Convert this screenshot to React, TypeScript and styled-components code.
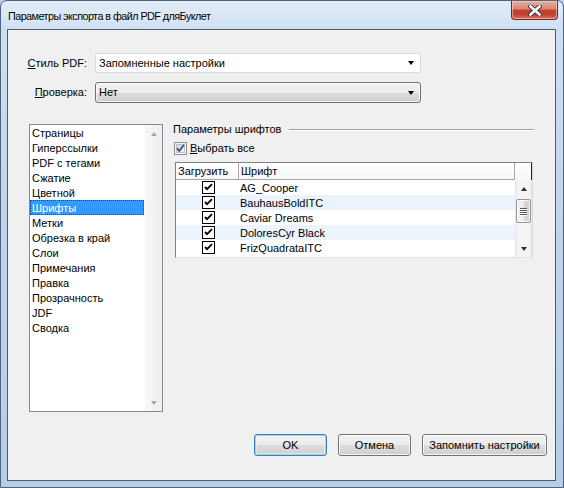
import React from "react";
import styled, { createGlobalStyle } from "styled-components";

const Global = createGlobalStyle`
  html, body { margin: 0; padding: 0; background: #b9d1ea; }
  body {
    width: 564px; height: 488px; overflow: hidden;
    font-family: "Liberation Sans", Arial, sans-serif;
    font-size: 11px; color: #000;
  }
  * { box-sizing: border-box; }
`;

const Window = styled.div`
  width: 564px;
  height: 488px;
  border: 1px solid #4f6478;
  border-radius: 7px 7px 0 0;
  background: linear-gradient(180deg, #e3edf8 0%, #cddff2 6%, #c1d6ed 40%, #b4cde8 100%);
  display: flex;
  flex-direction: column;
  padding: 0 7px 6px 6px;
  overflow: hidden;
`;

const TitleBar = styled.div`
  height: 28px;
  flex: none;
  display: flex;
  align-items: flex-start;
  justify-content: space-between;
  margin-right: -2px;
`;

const Title = styled.div`
  padding: 9px 0 0 1px;
  font-size: 10.8px;
  letter-spacing: -0.55px;
  line-height: 13px;
  color: #000;
  text-shadow: 0 0 6px rgba(255, 255, 255, 0.9);
`;

const CloseButton = styled.div`
  width: 47px;
  height: 19px;
  border: 1px solid #6b2b23;
  border-top: none;
  border-radius: 0 0 4px 4px;
  background: linear-gradient(180deg, #e6ada0 0%, #d88676 45%, #c4402f 50%, #c3412f 75%, #d8705e 100%);
  box-shadow: inset 0 0 0 1px rgba(255, 220, 210, 0.55);
  display: flex;
  align-items: center;
  justify-content: center;
`;

const Client = styled.div`
  flex: 1;
  border: 1px solid #4e5b69;
  background: #f0f0f0;
  display: flex;
  flex-direction: column;
  padding: 23px 8px 24px 0;
`;

const FormGrid = styled.div`
  display: grid;
  grid-template-columns: 79px 326px;
  column-gap: 8px;
  row-gap: 9px;
  align-items: center;
`;

const FieldLabel = styled.div`
  text-align: right;
  line-height: 13px;
`;

const ComboEditable = styled.div`
  height: 20px;
  border: 1px solid #dadada;
  border-radius: 2px;
  background: #fff;
  display: flex;
  align-items: center;
  padding: 0 3px 0 3px;
`;

const ComboButton = styled.div`
  height: 21px;
  border: 1px solid #707070;
  border-radius: 3px;
  background: linear-gradient(180deg, #f2f2f2 0%, #ebebeb 50%, #dddddd 51%, #cfcfcf 100%);
  box-shadow: inset 0 0 0 1px rgba(255, 255, 255, 0.7);
  display: flex;
  align-items: center;
  padding: 0 3px 0 3px;
`;

const ComboText = styled.div`
  flex: 1;
  line-height: 13px;
`;

const Arrow = styled.div`
  width: 0;
  height: 0;
  border-left: 3.5px solid transparent;
  border-right: 3.5px solid transparent;
  border-top: 4px solid #000;
  margin-right: 3px;
`;

const Body = styled.div`
  display: flex;
  margin-top: 21px;
  padding-left: 21px;
  gap: 10px;
  align-items: flex-start;
`;

const ListBox = styled.div`
  width: 134px;
  height: 288px;
  border: 1px solid #828790;
  background: #fff;
  display: flex;
`;

const ListItems = styled.div`
  flex: 1;
`;

const ListItem = styled.div<{ $selected?: boolean }>`
  height: 15px;
  line-height: 14px;
  padding: 1px 0 0 2px;
  margin-right: 1px;
  white-space: nowrap;
  background: ${(p) => (p.$selected ? "#3399ff" : "transparent")};
  color: ${(p) => (p.$selected ? "#fff" : "#000")};
  outline: ${(p) => (p.$selected ? "1px dotted #1a3f7a" : "none")};
  outline-offset: -1px;
`;

const ListScroll = styled.div`
  width: 17px;
  background: linear-gradient(90deg, #f7f7f7 0%, #eeeeee 100%);
  border-left: 1px solid #f4f4f4;
  display: flex;
  flex-direction: column;
  justify-content: space-between;
  align-items: center;
`;

const ArrowBox = styled.div`
  height: 17px;
  width: 100%;
  display: flex;
  align-items: center;
  justify-content: center;
`;

const TriUp = styled.div<{ $c?: string }>`
  width: 0;
  height: 0;
  border-left: 3.5px solid transparent;
  border-right: 3.5px solid transparent;
  border-bottom: 4px solid ${(p) => p.$c || "#303030"};
`;

const TriDown = styled.div<{ $c?: string }>`
  width: 0;
  height: 0;
  border-left: 3.5px solid transparent;
  border-right: 3.5px solid transparent;
  border-top: 4px solid ${(p) => p.$c || "#303030"};
`;

const RightPanel = styled.div`
  width: 361px;
  margin-top: -2px;
  display: flex;
  flex-direction: column;
`;

const GroupHeader = styled.div`
  display: flex;
  align-items: center;
  height: 14px;
  gap: 8px;
`;

const GroupTitle = styled.div`
  line-height: 13px;
  white-space: nowrap;
`;

const GroupLine = styled.div`
  flex: 1;
  height: 0;
  border-top: 1px solid #a0a0a0;
  border-bottom: 1px solid #fff;
  margin-top: 1px;
`;

const CheckRow = styled.label`
  display: flex;
  align-items: center;
  gap: 3px;
  margin: 6px 0 0 1px;
  height: 13px;
  line-height: 13px;
`;

const Table = styled.div`
  margin: 7px 0 0 2px;
  width: 358px;
  height: 96px;
  border-top: 1px solid #828282;
  border-left: 1px solid #828282;
  border-right: 1px solid #d8d8d8;
  border-bottom: 1px solid #e3e3e3;
  background: #fff;
  display: flex;
  flex-direction: column;
`;

const HeaderRow = styled.div`
  height: 17px;
  display: flex;
  background: linear-gradient(180deg, #ffffff 0%, #f6f6f6 100%);
`;

const HeaderCell = styled.div<{ $w: number }>`
  width: ${(p) => p.$w}px;
  border-right: 1px solid #a5a5a5;
  border-bottom: 1px solid #a5a5a5;
  padding-left: 2px;
  line-height: 16px;
  white-space: nowrap;
`;

const HeaderEnd = styled.div`
  flex: 1;
  border-right: 1px solid #202020;
`;

const TableBody = styled.div`
  flex: 1;
  display: flex;
`;

const Rows = styled.div`
  width: 339px;
`;

const Row = styled.div<{ $alt?: boolean }>`
  height: 15px;
  display: flex;
  align-items: center;
  background: ${(p) => (p.$alt ? "#ebf3fd" : "#fff")};
`;

const CheckCell = styled.div`
  width: 63px;
  display: flex;
  justify-content: center;
  padding-left: 2px;
`;

const NameCell = styled.div`
  padding: 1px 0 0 1px;
  line-height: 14px;
  white-space: nowrap;
`;

const VScroll = styled.div`
  width: 17px;
  background: linear-gradient(90deg, #e8e8e8 0%, #f5f5f5 20%, #f5f5f5 80%, #e8e8e8 100%);
  display: flex;
  flex-direction: column;
  align-items: center;
`;

const Thumb = styled.div`
  width: 15px;
  height: 24px;
  margin-top: 2px;
  border: 1px solid #959595;
  border-radius: 2px;
  background: linear-gradient(90deg, #f3f3f3 0%, #ebebeb 50%, #d9d9d9 51%, #cdcdcd 100%);
  box-shadow: inset 0 0 0 1px rgba(255, 255, 255, 0.8);
  display: flex;
  flex-direction: column;
  align-items: center;
  justify-content: center;
  gap: 1px;
`;

const Grip = styled.div`
  width: 7px;
  height: 1px;
  background: #555;
  box-shadow: 0 1px 0 #fff;
`;

const Spacer = styled.div`
  flex: 1;
`;

const ButtonRow = styled.div`
  display: flex;
  justify-content: flex-end;
  gap: 11px;
  margin-top: auto;
`;

const DialogButton = styled.div<{ $w: number; $default?: boolean }>`
  width: ${(p) => p.$w}px;
  height: 22px;
  border: 1px solid ${(p) => (p.$default ? "#3c7fb1" : "#707070")};
  border-radius: 3px;
  background: linear-gradient(180deg, #f2f2f2 0%, #ebebeb 50%, #dddddd 51%, #cfcfcf 100%);
  box-shadow: ${(p) =>
    p.$default
      ? "inset 0 0 0 1px #9ed3f0, inset 0 0 0 2px rgba(255,255,255,0.4)"
      : "inset 0 0 0 1px rgba(255,255,255,0.8)"};
  display: flex;
  align-items: center;
  justify-content: center;
  line-height: 13px;
  white-space: nowrap;
`;

const CloseGlyph = () => (
  <svg width="14" height="11" viewBox="0 0 14 11">
    <path d="M2.5 1.5 L11.5 9.5 M11.5 1.5 L2.5 9.5" stroke="#3b3b3b" strokeWidth="4.6" strokeLinecap="square" />
    <path d="M2.5 1.5 L11.5 9.5 M11.5 1.5 L2.5 9.5" stroke="#ffffff" strokeWidth="2.6" strokeLinecap="square" />
  </svg>
);

const Win7Check = () => (
  <svg width="13" height="13" viewBox="0 0 13 13">
    <defs>
      <linearGradient id="cbg" x1="0" y1="0" x2="1" y2="1">
        <stop offset="0" stopColor="#cbcfd5" />
        <stop offset="1" stopColor="#f6f6f6" />
      </linearGradient>
    </defs>
    <rect x="0.5" y="0.5" width="12" height="12" fill="#f4f4f4" stroke="#8e8f8f" />
    <rect x="2.5" y="2.5" width="8" height="8" fill="url(#cbg)" stroke="#c1c4c8" />
    <path d="M3 6.3 L5.2 9 L10 2.8" fill="none" stroke="#3b4f94" strokeWidth="1.8" />
  </svg>
);

const ClassicCheck = () => (
  <svg width="13" height="13" viewBox="0 0 13 13">
    <rect x="0.5" y="0.5" width="12" height="12" fill="#fff" stroke="#000" />
    <path d="M3 6 L5 8.2 L10 3.2" fill="none" stroke="#000" strokeWidth="1.9" />
  </svg>
);

const sections = [
  "Страницы",
  "Гиперссылки",
  "PDF с тегами",
  "Сжатие",
  "Цветной",
  "Шрифты",
  "Метки",
  "Обрезка в край",
  "Слои",
  "Примечания",
  "Правка",
  "Прозрачность",
  "JDF",
  "Сводка",
];

const fonts = ["AG_Cooper", "BauhausBoldITC", "Caviar Dreams", "DoloresCyr Black", "FrizQuadrataITC"];

export default function App() {
  return (
    <>
      <Global />
      <Window>
        <TitleBar>
          <Title>Параметры экспорта в файл PDF дляБуклет</Title>
          <CloseButton>
            <CloseGlyph />
          </CloseButton>
        </TitleBar>
        <Client>
          <FormGrid>
            <FieldLabel>
              <u>С</u>тиль PDF:
            </FieldLabel>
            <ComboEditable>
              <ComboText>Запомненные настройки</ComboText>
              <Arrow />
            </ComboEditable>
            <FieldLabel>
              <u>П</u>роверка:
            </FieldLabel>
            <ComboButton>
              <ComboText>Нет</ComboText>
              <Arrow />
            </ComboButton>
          </FormGrid>
          <Body>
            <ListBox>
              <ListItems>
                {sections.map((s) => (
                  <ListItem key={s} $selected={s === "Шрифты"}>
                    {s}
                  </ListItem>
                ))}
              </ListItems>
              <ListScroll>
                <ArrowBox>
                  <TriUp $c="#a7a7a7" />
                </ArrowBox>
                <ArrowBox>
                  <TriDown $c="#a7a7a7" />
                </ArrowBox>
              </ListScroll>
            </ListBox>
            <RightPanel>
              <GroupHeader>
                <GroupTitle>Параметры шрифтов</GroupTitle>
                <GroupLine />
              </GroupHeader>
              <CheckRow>
                <Win7Check />
                <span>
                  <u>В</u>ыбрать все
                </span>
              </CheckRow>
              <Table>
                <HeaderRow>
                  <HeaderCell $w={63}>Загрузить</HeaderCell>
                  <HeaderCell $w={276}>Шрифт</HeaderCell>
                  <HeaderEnd />
                </HeaderRow>
                <TableBody>
                  <Rows>
                    {fonts.map((f, i) => (
                      <Row key={f} $alt={i % 2 === 1}>
                        <CheckCell>
                          <ClassicCheck />
                        </CheckCell>
                        <NameCell>{f}</NameCell>
                      </Row>
                    ))}
                  </Rows>
                  <VScroll>
                    <ArrowBox>
                      <TriUp />
                    </ArrowBox>
                    <Thumb>
                      <Grip />
                      <Grip />
                      <Grip />
                      <Grip />
                    </Thumb>
                    <Spacer />
                    <ArrowBox>
                      <TriDown />
                    </ArrowBox>
                  </VScroll>
                </TableBody>
              </Table>
            </RightPanel>
          </Body>
          <ButtonRow>
            <DialogButton $w={73} $default>
              OK
            </DialogButton>
            <DialogButton $w={73}>Отмена</DialogButton>
            <DialogButton $w={125}>Запомнить настройки</DialogButton>
          </ButtonRow>
        </Client>
      </Window>
    </>
  );
}
